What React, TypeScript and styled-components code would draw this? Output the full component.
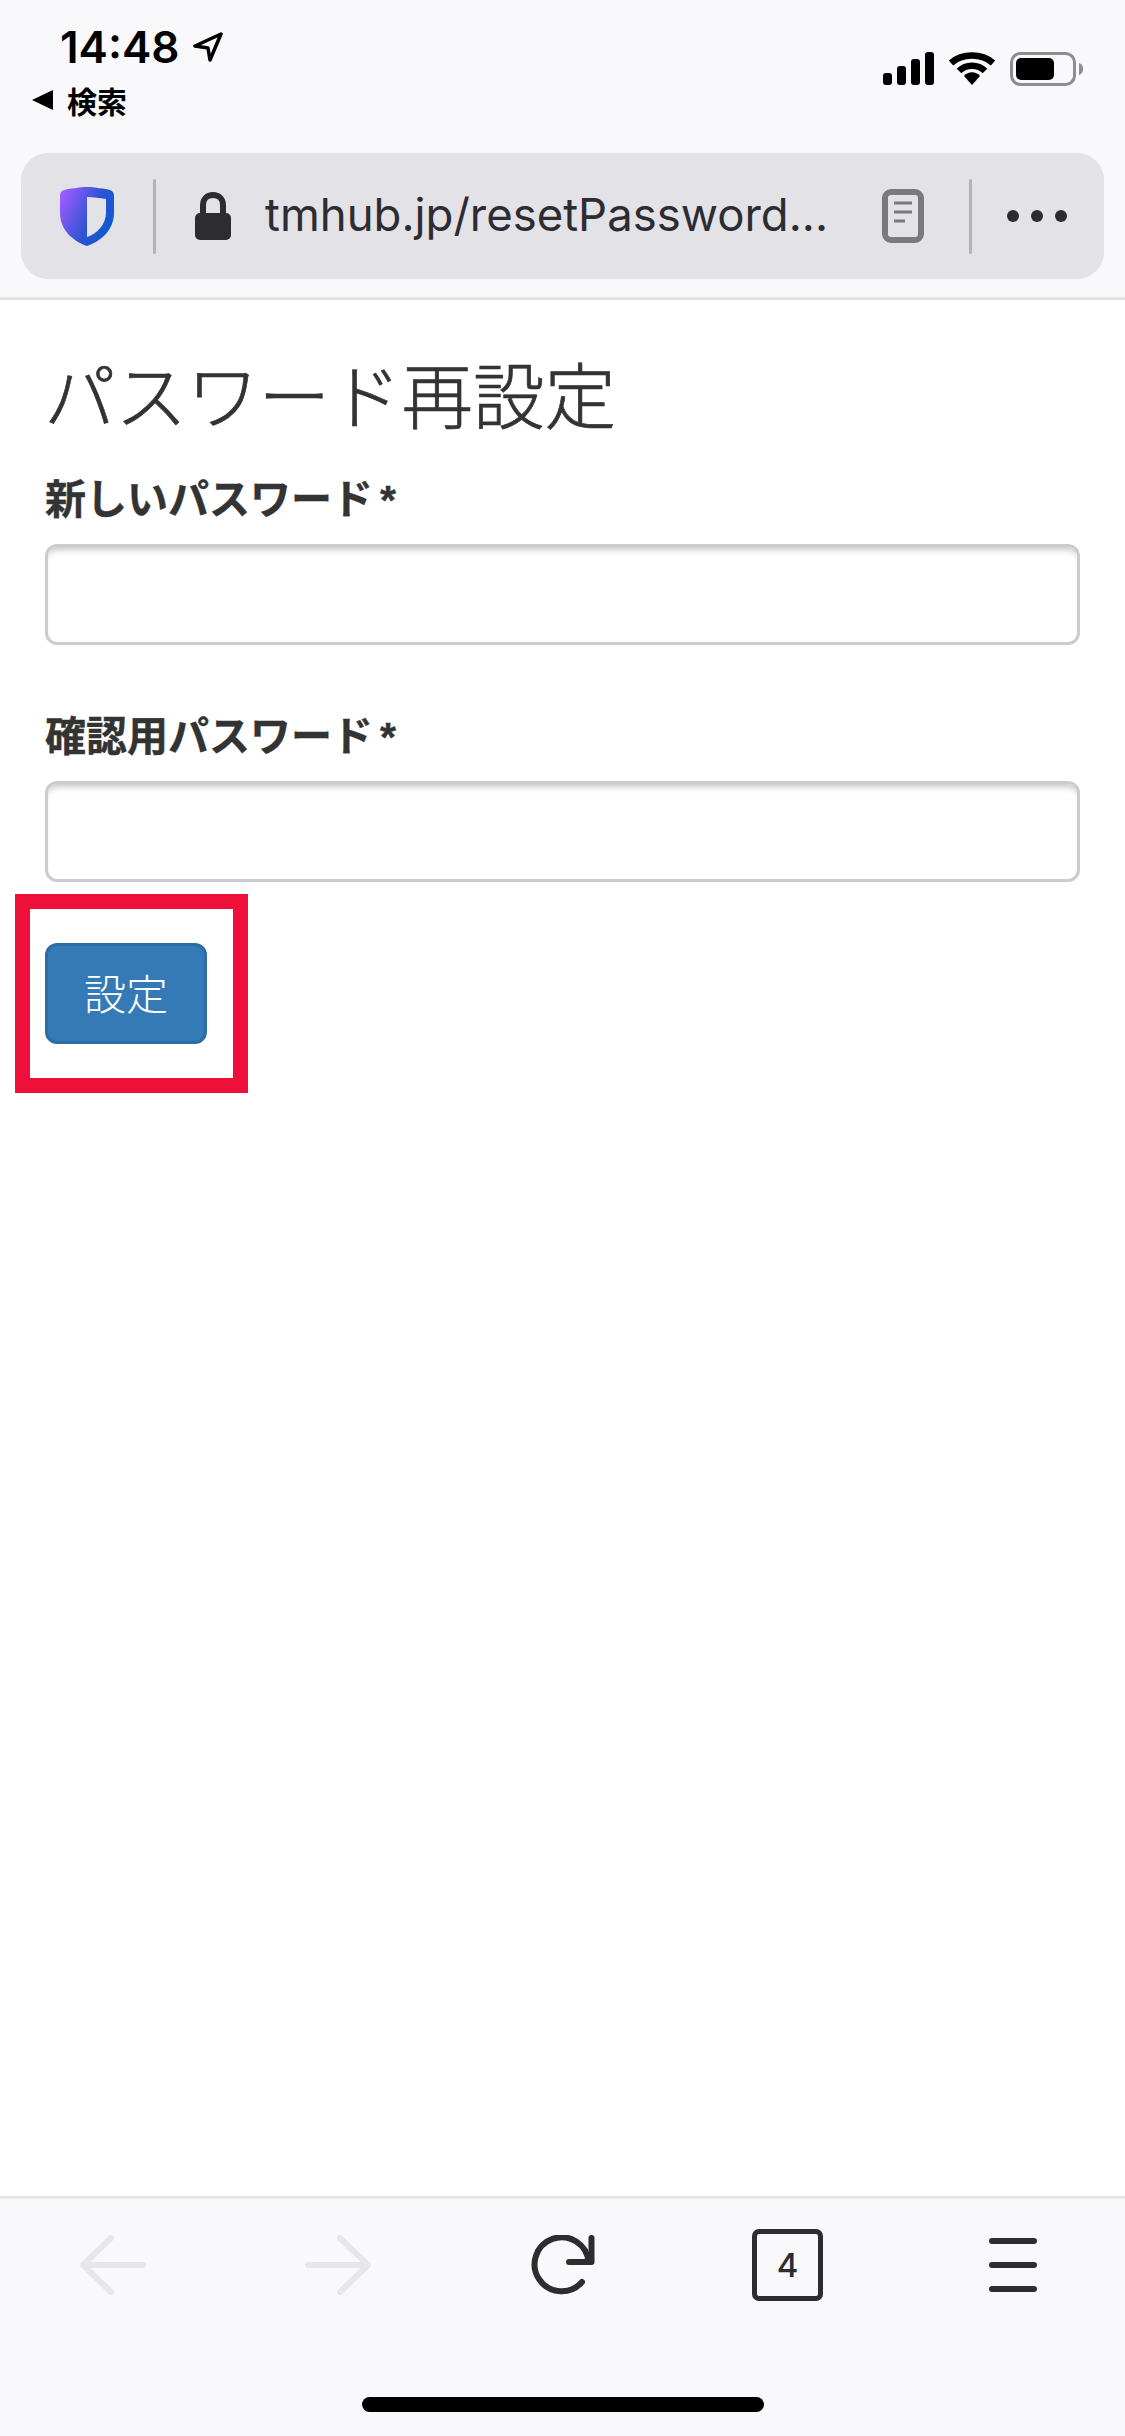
import React from 'react'
import styled, { createGlobalStyle } from 'styled-components'

const GlobalStyle = createGlobalStyle`
  html, body {
    margin: 0;
    padding: 0;
    background: #fff;
  }
  * {
    box-sizing: border-box;
  }
`

const Page = styled.div`
  width: 1125px;
  height: 2436px;
  display: flex;
  flex-direction: column;
  font-family: "Noto Sans CJK JP", "Liberation Sans", sans-serif;
  overflow: hidden;
`

const Header = styled.header`
  height: 300px;
  background: #f9f9fb;
  border-bottom: 3px solid #e3e3e5;
  padding: 0 21px;
  display: flex;
  flex-direction: column;
`

const StatusBar = styled.div`
  height: 153px;
  display: flex;
  justify-content: space-between;
  padding: 24px 21px 0 11px;
`

const StatusLeft = styled.div`
  display: flex;
  flex-direction: column;
`

const TimeRow = styled.div`
  display: flex;
  align-items: center;
  gap: 14px;
  height: 46px;
  padding-left: 28px;
`

const Time = styled.span`
  font-family: Inter, "Liberation Sans", sans-serif;
  font-size: 44px;
  font-weight: 600;
  color: #000;
  line-height: 46px;
`

const BackRow = styled.div`
  display: flex;
  align-items: center;
  gap: 14px;
  margin-top: 13px;
`

const BackLabel = styled.span`
  font-size: 30px;
  font-weight: 700;
  line-height: 34px;
  color: #000;
`

const StatusRight = styled.div`
  display: flex;
  align-items: flex-start;
  gap: 15px;
  padding-top: 28px;
`

const UrlBar = styled.div`
  height: 126px;
  background: #e2e2e7;
  border-radius: 27px;
  display: flex;
  align-items: center;
  padding-left: 39px;
`

const Divider = styled.div<{ $left?: number }>`
  width: 3px;
  height: 75px;
  margin-left: ${(p) => p.$left ?? 0}px;
  border-radius: 2px;
  background: #b3b3b8;
`

const UrlText = styled.span`
  font-family: Inter, "Liberation Sans", sans-serif;
  font-size: 45.5px;
  color: #2c2c31;
  width: 617px;
  white-space: nowrap;
  margin-left: 34px;
  padding-bottom: 4px;
`

const Main = styled.main`
  flex: 1;
  background: #fff;
  padding: 0 45px;
  color: #333;
`

const Title = styled.h1`
  margin: 56px 0 0 -1px;
  font-size: 71.5px;
  font-weight: 300;
  line-height: 72px;
  -webkit-text-stroke: 0.7px #333;
`

const Field = styled.div`
  display: flex;
  flex-direction: column;
`

const Label = styled.label<{ $top: number }>`
  margin-top: ${(p) => p.$top}px;
  font-size: 41px;
  font-weight: 700;
  line-height: 50px;
  height: 50px;
  -webkit-text-stroke: 0.4px #333;
`

const Star = styled.span`
  font-family: "Liberation Sans", sans-serif;
  margin-left: 7px;
`

const Input = styled.input`
  display: block;
  width: 1035px;
  height: 101px;
  margin-top: 23px;
  background: #fff;
  border: 3px solid #ccc;
  border-radius: 12px;
  outline: none;
  box-shadow: inset 0 7px 6px -4px rgba(0, 0, 0, 0.22);
`

const Highlight = styled.div`
  width: 233px;
  height: 199px;
  margin: 12px 0 0 -30px;
  border: 15px solid #ee1038;
  padding: 34px 0 0 15px;
`

const SubmitButton = styled.button`
  display: flex;
  align-items: center;
  justify-content: center;
  width: 162px;
  height: 101px;
  padding: 0 0 5px;
  background: #337ab7;
  border: 3px solid #2e6da4;
  border-radius: 12px;
  color: #fff;
  font-family: inherit;
  font-size: 42px;
  font-weight: 300;
`

const Footer = styled.footer`
  height: 240px;
  background: #f9f9fb;
  border-top: 3px solid #e6e6e8;
  display: flex;
  flex-direction: column;
  align-items: center;
`

const Toolbar = styled.div`
  width: 100%;
  display: grid;
  grid-template-columns: repeat(5, 225px);
  justify-items: center;
  align-items: center;
  height: 132px;
`

const TabCount = styled.div`
  width: 71px;
  height: 72px;
  border: 5px solid #2c2c31;
  border-radius: 7px;
  display: flex;
  align-items: center;
  justify-content: center;
  font-family: Inter, "Liberation Sans", sans-serif;
  font-size: 33px;
  font-weight: 500;
  color: #2c2c31;
`

const HomeIndicator = styled.div`
  width: 402px;
  height: 15px;
  margin-top: 66px;
  border-radius: 8px;
  background: #000;
`

const App = () => {
  return (
    <>
      <GlobalStyle />
      <Page>
        <Header>
          <StatusBar>
            <StatusLeft>
              <TimeRow>
                <Time>14:48</Time>
                <svg width="30" height="30" viewBox="0 0 30 30">
                  <path d="M28 2 L2 14 L15 16 L17 28 Z" fill="none" stroke="#000" strokeWidth="3.5" strokeLinejoin="round" />
                </svg>
              </TimeRow>
              <BackRow>
                <svg width="21" height="20" viewBox="0 0 21 20">
                  <path d="M21 0 V20 L0 10 Z" fill="#000" />
                </svg>
                <BackLabel>検索</BackLabel>
              </BackRow>
            </StatusLeft>
            <StatusRight>
              <svg width="51" height="33" viewBox="0 0 51 33">
                <rect x="0" y="21" width="9" height="12" rx="3" fill="#000" />
                <rect x="14" y="14" width="9" height="19" rx="3" fill="#000" />
                <rect x="28" y="7" width="9" height="26" rx="3" fill="#000" />
                <rect x="42" y="0" width="9" height="33" rx="3" fill="#000" />
              </svg>
              <svg width="46" height="33" viewBox="0 0 46 33">
                <path d="M2 11 C13 1 33 1 44 11" fill="none" stroke="#000" strokeWidth="6.5" />
                <path d="M10 19 C17 12 29 12 36 19" fill="none" stroke="#000" strokeWidth="6.5" />
                <path d="M15 24 C19 19 27 19 31 24 L23 33 Z" fill="#000" />
              </svg>
              <svg width="73" height="34" viewBox="0 0 73 34">
                <rect x="1.5" y="1.5" width="63" height="31" rx="9" fill="none" stroke="#8e8e90" strokeWidth="3" />
                <rect x="6" y="6" width="38" height="22" rx="5" fill="#000" />
                <path d="M69 11 C72 12 73 14 73 17 C73 20 72 22 69 23 Z" fill="#8e8e90" />
              </svg>
            </StatusRight>
          </StatusBar>
          <UrlBar>
            <svg width="54" height="59" viewBox="0 0 54 59" style={{ marginRight: 39 }}>
              <defs>
                <linearGradient id="shield" x1="0" y1="0.2" x2="1" y2="0.7">
                  <stop offset="0" stopColor="#9d5cff" />
                  <stop offset="0.6" stopColor="#2a53d2" />
                  <stop offset="1" stopColor="#0a5bd0" />
                </linearGradient>
              </defs>
              <path
                d="M27 0 C34 0 46 2 50 3 C53 4 54 6 54 9 V26 C54 42 42 54 27 59 C12 54 0 42 0 26 V9 C0 6 1 4 4 3 C8 2 20 0 27 0 Z M27 10 V50 C37 47 46 37 46 26 V12 C40 11 33 10 27 10 Z"
                fill="url(#shield)"
                fillRule="evenodd"
              />
            </svg>
            <Divider />
            <svg width="36" height="48" viewBox="0 0 36 48" style={{ marginLeft: 39 }}>
              <path d="M8 22 V13 C8 7 12 3 18 3 C24 3 28 7 28 13 V22" fill="none" stroke="#2c2c31" strokeWidth="6" />
              <rect x="0" y="21" width="36" height="27" rx="5" fill="#2c2c31" />
            </svg>
            <UrlText>tmhub.jp/resetPassword...</UrlText>
            <svg width="42" height="54" viewBox="0 0 42 54">
              <rect x="3" y="3" width="36" height="48" rx="6" fill="none" stroke="#7a7a7c" strokeWidth="6" />
              <path d="M12 14 H30 M12 23 H30 M12 32 H23" stroke="#7a7a7c" strokeWidth="3" />
            </svg>
            <Divider $left={45} />
            <svg width="60" height="12" viewBox="0 0 60 12" style={{ marginLeft: 35 }}>
              <circle cx="6" cy="6" r="6" fill="#2c2c31" />
              <circle cx="30" cy="6" r="6" fill="#2c2c31" />
              <circle cx="54" cy="6" r="6" fill="#2c2c31" />
            </svg>
          </UrlBar>
        </Header>
        <Main>
          <Title>パスワード再設定</Title>
          <Field>
            <Label $top={43}>新しいパスワード<Star>*</Star></Label>
            <Input type="password" />
          </Field>
          <Field>
            <Label $top={63}>確認用パスワード<Star>*</Star></Label>
            <Input type="password" />
          </Field>
          <Highlight>
            <SubmitButton>設定</SubmitButton>
          </Highlight>
        </Main>
        <Footer>
          <Toolbar>
            <svg width="66" height="60" viewBox="0 0 66 60">
              <path d="M31 3 L3 30 L31 57 M3 30 H63" fill="none" stroke="#e7e7e9" strokeWidth="6" strokeLinecap="round" strokeLinejoin="round" />
            </svg>
            <svg width="66" height="60" viewBox="0 0 66 60">
              <path d="M35 3 L63 30 L35 57 M63 30 H3" fill="none" stroke="#e7e7e9" strokeWidth="6" strokeLinecap="round" strokeLinejoin="round" />
            </svg>
            <svg width="64" height="60" viewBox="0 0 64 60">
              <path d="M51 47 A27 27 0 1 1 57.5 27" fill="none" stroke="#2c2c31" strokeWidth="6" strokeLinecap="round" />
              <path d="M60.5 3 V27 H38" fill="none" stroke="#2c2c31" strokeWidth="6" strokeLinecap="round" strokeLinejoin="round" />
            </svg>
            <TabCount>4</TabCount>
            <svg width="48" height="54" viewBox="0 0 48 54">
              <rect x="0" y="0" width="48" height="6" rx="3" fill="#2c2c31" />
              <rect x="0" y="24" width="48" height="6" rx="3" fill="#2c2c31" />
              <rect x="0" y="48" width="48" height="6" rx="3" fill="#2c2c31" />
            </svg>
          </Toolbar>
          <HomeIndicator />
        </Footer>
      </Page>
    </>
  )
}

export default App
